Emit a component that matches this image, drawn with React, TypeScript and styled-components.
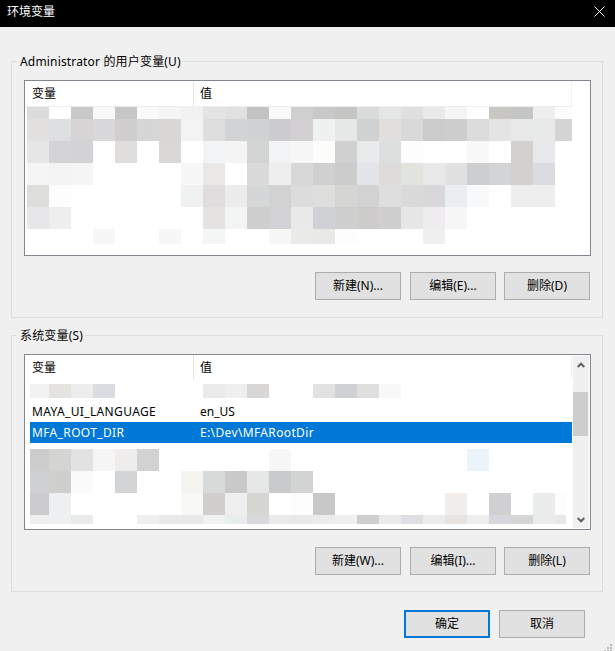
import React from 'react'
import styled, { createGlobalStyle } from 'styled-components'

const GlobalStyle = createGlobalStyle`
    html, body {
        margin:0;
        padding:0;
        background:#f0f0f0;
    }
    body {
        font-family:"Noto Sans","Noto Sans CJK SC",sans-serif;
        font-size:12px;
        color:#000;
    }
`;

const Window = styled.div`
    position:relative;
    width:615px;
    height:651px;
    overflow:hidden;
    background:#f0f0f0;
`;

const TitleBar = styled.div`
    display:flex;
    justify-content:space-between;
    height:27px;
    padding:3px 10px 0 7px;
    box-sizing:border-box;
    background:#000;
    color:#fff;
    line-height:18px;
    svg {
        margin-top:3px;
    }
`;

const Content = styled.div`
    display:flex;
    flex-direction:column;
    gap:17px;
    padding:34px 12px 0 11px;
`;

const Group = styled.section`
    display:flex;
    flex-direction:column;
    height:257px;
    padding:0 11px 0 12px;
    box-sizing:border-box;
    border:1px solid #dcdcdc;
`;

const Legend = styled.div`
    align-self:flex-start;
    height:16px;
    margin:-9px 0 11px -7px;
    padding:0 2px 0 3px;
    line-height:18px;
    letter-spacing:.17px;
    background:#f0f0f0;
    white-space:nowrap;
`;

const ListBox = styled.div`
    height:176px;
    flex:none;
    box-sizing:border-box;
    border:1px solid #828790;
    background:#fff;
`;

const ListRow = styled.div`
    display:flex;
    height:100%;
`;

const ListMain = styled.div`
    width:547px;
    flex:none;
`;

const Header = styled.div<{ $line?: boolean }>`
    display:flex;
    width:547px;
    height:${p => p.$line ? 26 : 25}px;
    box-sizing:border-box;
    border-bottom:${p => p.$line ? '1px solid #eeeeee' : 'none'};
    line-height:26px;
`;

const HeaderCell = styled.div<{ $width: number; $pad: number; $end?: boolean }>`
    width:${p => p.$width}px;
    padding-left:${p => p.$pad}px;
    box-sizing:border-box;
    border-right:1px solid ${p => p.$end ? '#f2f2f2' : '#e5e5e5'};
`;

const Mosaic = styled.div<{ $columns: string; $rows: string; $left: number; $top?: number }>`
    display:grid;
    grid-template-columns:${p => p.$columns};
    grid-template-rows:${p => p.$rows};
    margin:${p => p.$top || 0}px 0 0 ${p => p.$left}px;
`;

const Pixel = styled.div<{ $color: string }>`
    background:${p => p.$color};
`;

const Item = styled.div<{ $selected?: boolean; $top?: number }>`
    display:flex;
    height:21px;
    margin:${p => p.$top || 0}px 0 0 5px;
    padding-left:2px;
    line-height:22px;
    background:${p => p.$selected ? '#0078d7' : 'transparent'};
    color:${p => p.$selected ? '#fff' : '#000'};
`;

const ItemName = styled.span`
    width:168px;
    letter-spacing:.36px;
`;

const ItemValue = styled.span<{ $wide?: boolean }>`
    letter-spacing:${p => p.$wide ? '.36px' : '0'};
`;

const Scrollbar = styled.div`
    display:flex;
    flex-direction:column;
    width:16px;
    height:172px;
    margin:1px 0 0 1px;
    background:#f0f0f0;
`;

const Arrow = styled.div`
    display:flex;
    justify-content:center;
    align-items:center;
    height:17px;
    flex:none;
    padding-right:1px;
`;

const Track = styled.div`
    flex:1;
`;

const Thumb = styled.div`
    width:15px;
    height:44px;
    margin-top:19px;
    background:#cdcdcd;
`;

const ButtonRow = styled.div<{ $top: number }>`
    display:flex;
    justify-content:flex-end;
    gap:8px;
    margin-top:${p => p.$top}px;
    padding-right:1px;
    button:first-child {
        margin-right:1px;
    }
`;

const Button = styled.button<{ $primary?: boolean }>`
    width:86px;
    height:28px;
    padding:0;
    box-sizing:border-box;
    border:${p => p.$primary ? '2px solid #0078d7' : '1px solid #adadad'};
    border-radius:0;
    outline:none;
    background:#e1e1e1;
    color:#000;
    font:inherit;
    line-height:16px;
`;

const Footer = styled.div`
    display:flex;
    justify-content:flex-end;
    gap:9px;
    padding:18px 30px 0 0;
`;

const Grip = styled.svg`
    position:absolute;
    right:2px;
    bottom:0;
`;

const W = '#ffffff';

const userColumns = 'repeat(24,22px) 17px';
const userRows = '12px repeat(5,22px) 15px';
const userPixels = [
    ['#dcdcdc', W, '#c8c8ca', '#f8f8f8', '#c6c6c8', '#fafafa', '#f5f5f5', '#f2f2f3', '#e4e4e5', '#e0e0e1', '#c3c3c4', '#fafafa', '#d0cfd0', '#c8c8c8', '#c5c5c3', '#dadbdd', '#e4e6e5', '#dfdfdf', '#e9e9e9', '#f5f5f5', W, '#c8c7c3', '#c4c6c5', '#eeeeee', '#fcfcfc'],
    ['#e2e1df', '#dddfe1', '#d6d4d4', '#d8d8da', '#d0cfcd', '#d6d6d6', '#d8d7d6', '#f3f3f4', '#dedede', '#d2d3d4', '#d0d1d3', '#ccccce', '#d2d0d2', '#eef1f0', '#e6e7e7', '#cfd1d3', '#e1dfdd', '#d9d9d9', '#cbcbcb', '#cdcdcd', '#dcdcdc', '#e4e4e4', '#e8e8e8', '#e8e9e9', '#d4d4d4'],
    ['#e6e6e6', '#d4d4d7', '#d2d2d7', W, '#dfdcdc', W, '#d9d8d6', W, '#f2f3f5', '#f4f4f5', '#d3d4d4', '#f2f3f5', '#f6f6f6', '#fcfcfa', '#d0d0d0', '#e8eaec', '#dcdfde', '#fdfdfd', W, W, '#f8f8f8', W, '#d3d0d0', '#e8e9ea', W],
    ['#f5f5f5', '#f3f3f3', '#f5f5f5', W, W, W, W, '#f7f7f7', '#e9e8e6', W, '#dadada', '#eeeeee', '#d8d8d8', '#d0d0d0', '#cccccc', '#e3e5e8', '#dddcda', '#e1e3df', '#e8e8e8', '#e2e1e1', '#ccced0', '#d2d4d6', '#d3d0d0', '#dadce0', W],
    ['#dddddb', '#fdfdfd', W, W, W, W, W, '#f0f2f2', '#dfdddd', '#ececec', '#d5d6d8', '#d2d2d2', '#dcdcdc', '#dededc', '#d5d5d3', '#d2d2d2', '#dedede', '#dadada', '#d9d7da', '#eaedf2', '#f8f9fb', W, '#eeeeee', '#eeeeee', W],
    ['#e7e7e9', '#eeeeee', W, W, W, W, W, W, '#e4e3e1', '#f3f5f5', '#cfcfcf', '#d2d1d6', '#e9e9e9', '#cfd1d4', '#cfcfcf', '#cdccca', '#cfcfcf', '#e6e6e6', '#eeecee', '#f6f6f6', W, W, W, W, W],
    [W, W, W, '#f6f7f6', W, W, '#f6f7f6', W, '#f4f6f5', W, W, '#f6f7f6', '#eaeae8', '#e9e9e7', '#fdfdfd', W, W, W, '#f0f0f0', W, W, W, W, W, W],
];

const stripColumns = '19px repeat(17,22px)';
const stripPixels = [
    ['#f2f2f2', '#e5e3e0', '#ededed', '#d9dce0', W, W, W, W, '#ebebeb', '#f0eff0', '#d9d7d5', W, W, '#e2e2e2', '#d0d1d3', '#dfdfdd', '#f8f8f8', W],
];

const systemColumns = '19px repeat(23,22px) 11px';
const systemRows = 'repeat(3,22px) 9px';
const systemPixels = [
    ['#cdcdcd', '#d4d4d2', '#e2e2e2', '#f5f5f5', '#eeedeb', '#d2d2d2', W, W, W, W, W, '#f7f7f7', W, W, W, W, W, W, W, W, '#ebf3fb', W, W, W, W],
    ['#cfd0d2', '#cfcfcd', '#fafafa', W, '#d3d4d6', W, W, '#f5f4f0', '#d8dad9', '#c9c9c9', '#e6e8e7', '#c9cacc', '#d2d4d3', W, W, W, W, W, W, W, W, W, W, W, W],
    ['#cbcbcd', '#eeeff1', W, W, W, W, W, '#f8f8f6', '#d0cfcd', '#efefef', '#d6d7d3', W, '#fdfdfd', '#c8c8c8', W, W, W, W, W, '#f0edea', W, '#d0d0d2', W, '#ebeded', '#fcfcfc'],
    ['#eef0ef', '#eff0f1', '#e9ebe9', W, W, '#eef0ef', '#e8eae9', '#e8eaea', '#f0f1f1', '#e9eded', '#d8d9dc', '#e9ebea', '#e8eaea', '#ebeded', '#eeefef', '#cfcfcf', '#e9eaea', '#dfdfe3', '#ececec', '#e6e3e0', '#eeeeee', '#d8d6dc', '#d6d6d6', '#eaecec', '#e8e8e8'],
];

const renderPixels = (rows: string[][]) =>
    rows.flatMap((row, y) => row.map((color, x) => <Pixel key={ `${y}-${x}` } $color={ color } />));

const CloseIcon = () => (
    <svg width="11" height="11" viewBox="0 0 11 11" fill="none" stroke="#fff" strokeWidth="1">
        <path d="M0.5 0.5L10.5 10.5M10.5 0.5L0.5 10.5" />
    </svg>
);

const Chevron = ({ down }: { down?: boolean }) => (
    <svg width="8" height="6" viewBox="0 0 8 6" fill="none" stroke="#606060" strokeWidth="2">
        <path d={ down ? 'M0.7 1L4 4.3L7.3 1' : 'M0.7 5L4 1.7L7.3 5' } />
    </svg>
);

const Columns = ({ line }: { line?: boolean }) => (
    <Header $line={ line }>
        <HeaderCell $width={ 169 } $pad={ 7 }>变量</HeaderCell>
        <HeaderCell $width={ 378 } $pad={ 6 } $end>值</HeaderCell>
    </Header>
);

const App = () => {
    return <Window>
        <GlobalStyle />
        <TitleBar>
            <span>环境变量</span>
            <CloseIcon />
        </TitleBar>
        <Content>
            <Group>
                <Legend>Administrator 的用户变量(U)</Legend>
                <ListBox>
                    <Columns line />
                    <Mosaic $columns={ userColumns } $rows={ userRows } $left={ 2 }>
                        { renderPixels(userPixels) }
                    </Mosaic>
                </ListBox>
                <ButtonRow $top={ 16 }>
                    <Button>新建(N)...</Button>
                    <Button>编辑(E)...</Button>
                    <Button>删除(D)</Button>
                </ButtonRow>
            </Group>
            <Group>
                <Legend>系统变量(S)</Legend>
                <ListBox>
                    <ListRow>
                        <ListMain>
                            <Columns />
                            <Mosaic $columns={ stripColumns } $rows="14px" $left={ 5 } $top={ 4 }>
                                { renderPixels(stripPixels) }
                            </Mosaic>
                            <Item $top={ 3 }>
                                <ItemName>MAYA_UI_LANGUAGE</ItemName>
                                <ItemValue>en_US</ItemValue>
                            </Item>
                            <Item $selected>
                                <ItemName>MFA_ROOT_DIR</ItemName>
                                <ItemValue $wide>E:\Dev\MFARootDir</ItemValue>
                            </Item>
                            <Mosaic $columns={ systemColumns } $rows={ systemRows } $left={ 5 } $top={ 6 }>
                                { renderPixels(systemPixels) }
                            </Mosaic>
                        </ListMain>
                        <Scrollbar>
                            <Arrow><Chevron /></Arrow>
                            <Track><Thumb /></Track>
                            <Arrow><Chevron down /></Arrow>
                        </Scrollbar>
                    </ListRow>
                </ListBox>
                <ButtonRow $top={ 17 }>
                    <Button>新建(W)...</Button>
                    <Button>编辑(I)...</Button>
                    <Button>删除(L)</Button>
                </ButtonRow>
            </Group>
        </Content>
        <Footer>
            <Button $primary>确定</Button>
            <Button>取消</Button>
        </Footer>
        <Grip width="9" height="7" viewBox="0 0 9 7" fill="#b9b9b9">
            <rect x="6" y="0" width="2" height="2" />
            <rect x="3" y="3" width="2" height="2" />
            <rect x="6" y="3" width="2" height="2" />
            <rect x="0" y="6" width="2" height="1" />
            <rect x="3" y="6" width="2" height="1" />
            <rect x="6" y="6" width="2" height="1" />
        </Grip>
    </Window>
}
export default App
